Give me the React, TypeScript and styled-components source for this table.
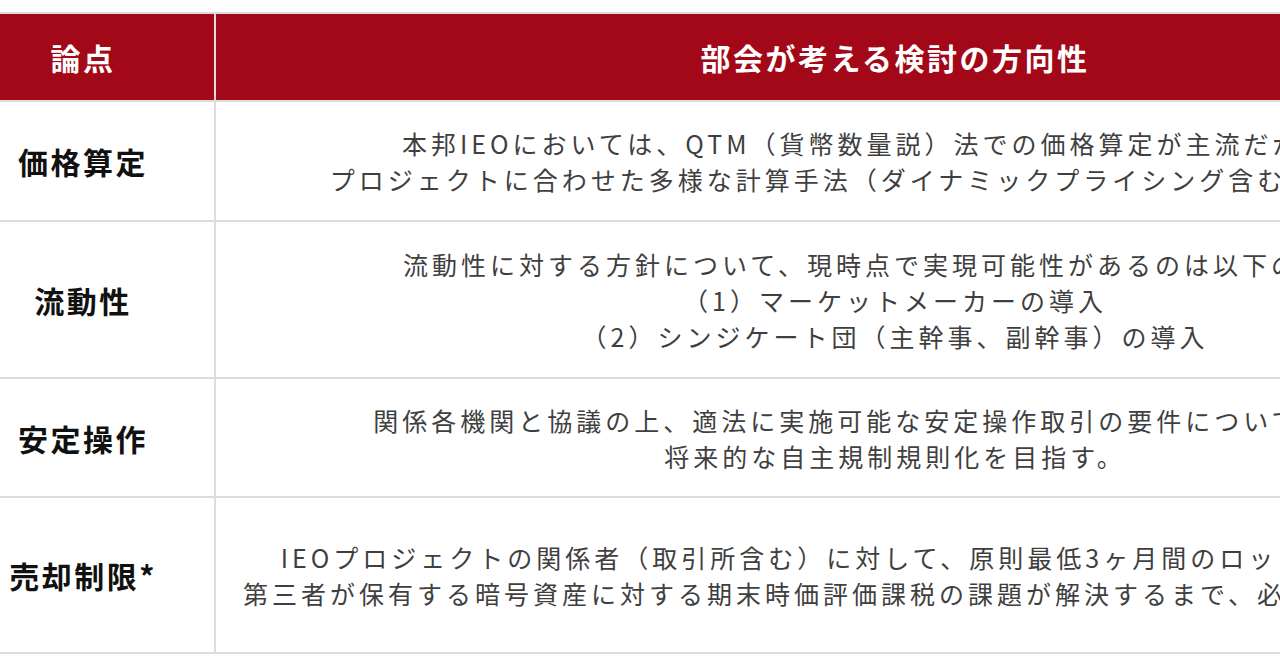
import React from "react";
import styled, { createGlobalStyle } from "styled-components";

const GlobalStyle = createGlobalStyle`
  html, body {
    margin: 0;
    padding: 0;
    background: #ffffff;
    overflow: hidden;
  }
  body {
    font-family: "Noto Sans CJK JP", "Noto Sans", sans-serif;
  }
`;

const Page = styled.div`
  width: 1280px;
  height: 670px;
  overflow: hidden;
  padding-top: 12px;
  box-sizing: border-box;
`;

const Table = styled.div`
  display: grid;
  grid-template-columns: 262px 1358px;
  grid-auto-rows: auto;
  gap: 2px;
  padding: 2px;
  width: max-content;
  margin-left: -50px;
  background: #dcdcdc;
`;

const HeadCell = styled.div`
  height: 86px;
  display: flex;
  align-items: center;
  justify-content: center;
  background: #a30818;
  color: #ffffff;
  font-size: 30px;
  font-weight: 700;
  letter-spacing: 2.5px;
`;

const LabelCell = styled.div<{ $h: number }>`
  height: ${(p) => p.$h}px;
  display: flex;
  align-items: center;
  justify-content: center;
  background: #ffffff;
  color: #111111;
  font-size: 30px;
  font-weight: 700;
  letter-spacing: 2.5px;
`;

const BodyCell = styled.div<{ $h: number }>`
  height: ${(p) => p.$h}px;
  display: flex;
  flex-direction: column;
  align-items: center;
  justify-content: center;
  background: #ffffff;
  color: #3f3f3f;
  font-size: 25px;
  font-weight: 400;
  letter-spacing: 4px;
  line-height: 36px;
`;

const Line = styled.span`
  display: block;
  white-space: nowrap;
`;

const rows = [
  {
    label: "価格算定",
    h: 118,
    lines: [
      "本邦IEOにおいては、QTM（貨幣数量説）法での価格算定が主流だが、今後",
      "プロジェクトに合わせた多様な計算手法（ダイナミックプライシング含む）を検討する",
    ],
  },
  {
    label: "流動性",
    h: 155,
    lines: [
      "流動性に対する方針について、現時点で実現可能性があるのは以下の２点。",
      "（1）マーケットメーカーの導入",
      "（2）シンジケート団（主幹事、副幹事）の導入",
    ],
  },
  {
    label: "安定操作",
    h: 117,
    lines: [
      "関係各機関と協議の上、適法に実施可能な安定操作取引の要件について検討し、",
      "将来的な自主規制規則化を目指す。",
    ],
  },
  {
    label: "売却制限*",
    h: 154,
    lines: [
      "IEOプロジェクトの関係者（取引所含む）に対して、原則最低3ヶ月間のロックアップを求める",
      "第三者が保有する暗号資産に対する期末時価評価課税の課題が解決するまで、必要な措置を講じる。",
    ],
  },
];

const App = () => {
  return (
    <>
      <GlobalStyle />
      <Page>
        <Table>
          <HeadCell>論点</HeadCell>
          <HeadCell>部会が考える検討の方向性</HeadCell>
          {rows.map((row) => (
            <React.Fragment key={row.label}>
              <LabelCell $h={row.h}>{row.label}</LabelCell>
              <BodyCell $h={row.h}>
                {row.lines.map((line) => (
                  <Line key={line}>{line}</Line>
                ))}
              </BodyCell>
            </React.Fragment>
          ))}
        </Table>
      </Page>
    </>
  );
};

export default App;
